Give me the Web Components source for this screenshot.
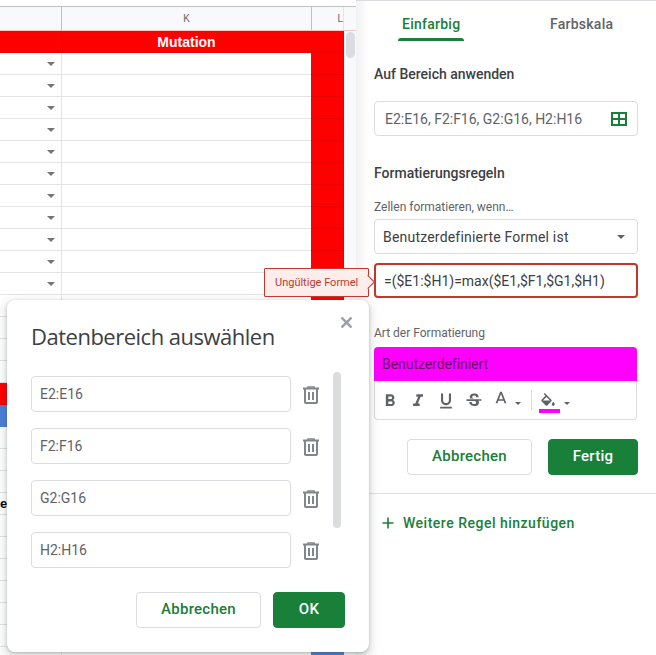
<!DOCTYPE html>
<html lang="de"><head><meta charset="utf-8"><title>Bedingte Formatierung</title>
<style>
html,body{margin:0;padding:0;background:#fff}
body{font-family:Roboto,"Liberation Sans",sans-serif;overflow:hidden;width:656px;height:655px}
</style></head><body>
<x-app></x-app>
<script>
function def(name, html, init){
  customElements.define(name, class extends HTMLElement{
    constructor(){super();const r=this.attachShadow({mode:'open'});r.innerHTML=html;}
    connectedCallback(){ if(init) init.call(this,this.shadowRoot); }
  });
}
const FONT='Roboto,"Liberation Sans",sans-serif';

def('x-btn',`<style>
:host{display:inline-flex;align-items:center;justify-content:center;box-sizing:border-box;height:36px;padding-bottom:2px;border-radius:4px;font:500 15px/1 ${FONT};letter-spacing:.25px;border:1px solid #dadce0;background:#fff;color:#188038}
:host([primary]){background:#188038;border-color:#188038;color:#fff}
</style><slot></slot>`);

def('x-field',`<style>
:host{display:flex;align-items:center;box-sizing:border-box;height:36px;border:1px solid #dadce0;border-radius:4px;padding:0 10px;font:400 14px/1 ${FONT};color:#5f6368;background:#fff}
::slotted(svg){margin-left:auto}
</style><slot></slot>`);

def('x-sheet',`<style>
:host{display:block;position:relative;width:356px;height:655px;overflow:hidden;background:#fff;flex:none;font-family:"Liberation Sans",sans-serif}
.top{height:6px}
.head{display:grid;grid-template-columns:62px 250px 32px 12px;height:25px;box-sizing:border-box;border-top:1px solid #c0c0c0;border-bottom:1px solid #f4c2c2;background:#f8f9fa;font-size:10px;color:#666}
.head div{display:flex;align-items:center;justify-content:center;box-sizing:border-box;border-right:1px solid #c0c0c0}
.head div:nth-child(3){justify-content:flex-end;padding-right:0;border-right:1px solid #e2e3e3}
.head div:last-child{border:0}
.body{display:grid;grid-template-columns:62px 250px 32px 12px;grid-auto-rows:22px}
.c{box-sizing:border-box;border-right:1px solid #e2e3e3;border-bottom:1px solid #e2e3e3;position:relative;display:flex;align-items:center}
.h{background:#f00;color:#fff;border-color:#e60000;font:700 14px/1 "Liberation Sans",sans-serif;justify-content:center}
.red{background:#f00;border-color:#e80000}
.blue{background:#4a7fd8;border-color:#4a7fd8}
.l{margin-left:-1px}
.tr{border-right:0;border-bottom:0;background:#f8f9fa;grid-column:4}
.ar{position:absolute;left:47px;top:9px;width:0;height:0;border:4px solid transparent;border-top:4px solid #757575;border-bottom:0}
b{font-size:13px;color:#000;position:absolute;left:0}
.thumb{position:absolute;left:346px;top:32px;width:9px;height:26px;border-radius:5px;background:#dadce0}
</style>
<div class="top"></div>
<div class="head"><div></div><div>K</div><div>L</div><div></div></div>
<div class="body" id="b"></div><div class="thumb"></div>`,function(r){
  const b=r.getElementById('b'); if(b.children.length) return;
  let h='<div class="c h"></div><div class="c h">Mutation</div><div class="c h red l"></div><div class="c tr"></div>';
  for(let i=0;i<28;i++){
    let cls=i===15?'red':i===16?'blue':'';
    let l=(i<=14||i===15||i===27)?(i===27||i===16?'blue':'red'):cls;
    let first=i<=10?'<span class="ar"></span>':(i===20?'<b>e</b>':'');
    h+=`<div class="c ${cls}">${first}</div><div class="c ${cls}"></div><div class="c l ${l}"></div><div class="c tr"></div>`;
  }
  b.innerHTML=h;
});

def('x-tabs',`<style>
:host{display:flex;height:41px;box-sizing:border-box;border-top:1px solid #dadce0;font:500 14px/1 ${FONT};letter-spacing:.25px;color:#5f6368;position:relative}
span{position:absolute;top:16px}
.a{left:46px;color:#188038}
.b{left:194px}
i{position:absolute;left:42px;top:37px;width:66px;height:3px;background:#188038;border-radius:3px 3px 0 0}
</style><span class="a">Einfarbig</span><span class="b">Farbskala</span><i></i>`);

def('x-tooltip',`<style>
:host{position:absolute;left:264px;top:268px;width:105px;height:29px;box-sizing:border-box;border:1px solid #c5372c;background:#fdeeec;border-radius:1px;color:#c5372c;font:400 11px/27px ${FONT};padding-left:10px;white-space:nowrap;z-index:3}
i{position:absolute;right:-5px;top:8px;width:10px;height:10px;transform:rotate(45deg);background:#fdeeec;border-top:1px solid #c5372c;border-right:1px solid #c5372c;box-sizing:border-box}
</style><slot></slot><i></i>`);

const I=(d,x='')=>`<svg width="20" height="20" viewBox="0 0 24 24" fill="#5f6368" ${x}><path d="${d}"/></svg>`;
def('x-toolbar',`<style>
:host{display:flex;align-items:center;height:39px;box-sizing:border-box;border:1px solid #dadce0;border-top:0;border-radius:0 0 4px 4px;padding:2px 0 0 5px;position:relative}
svg{display:block;flex:none}
.s{margin-right:8px}
.dd{width:0;height:0;border:3px solid transparent;border-top:3px solid #5f6368;border-bottom:0;margin-top:5px;margin-left:4px;flex:none}
.sep{width:1px;height:20px;background:#dadce0;margin:-2px 7px 0 10px;flex:none}
.fill{position:relative;width:21px;height:20px;flex:none;top:2px}
.fill svg{position:absolute;left:0;top:0}
.fill i{position:absolute;left:0;bottom:0;width:21px;height:4px;background:#f0f}
</style>
${I('M15.6 10.79c.97-.67 1.65-1.77 1.65-2.79 0-2.26-1.75-4-4-4H7v14h7.04c2.09 0 3.71-1.7 3.71-3.79 0-1.52-.86-2.82-2.15-3.42zM10 6.5h3c.83 0 1.5.67 1.5 1.5s-.67 1.5-1.5 1.5h-3v-3zm3.5 9H10v-3h3.5c.83 0 1.5.67 1.5 1.5s-.67 1.5-1.5 1.5z','class="s"')}
${I('M10 4v3h2.21l-3.42 8H6v3h8v-3h-2.21l3.42-8H18V4z','class="s"')}
${I('M12 17c3.31 0 6-2.69 6-6V3h-2.5v8c0 1.93-1.57 3.5-3.5 3.5S8.5 12.93 8.5 11V3H6v8c0 3.31 2.69 6 6 6zm-7 2v2h14v-2H5z','class="s"')}
${I('M6.85 7.08C6.85 4.37 9.45 3 12.24 3c1.64 0 3 .49 3.9 1.28.77.65 1.46 1.73 1.46 3.24h-3.01c0-.31-.05-.59-.15-.85-.29-.86-1.2-1.28-2.25-1.28-1.86 0-2.34 1.02-2.34 1.7 0 .48.25.88.74 1.21.38.25.77.48 1.41.7H7.39c-.21-.34-.54-.89-.54-1.92zM21 12v-2H3v2h9.62c1.15.45 1.96.75 1.96 1.97 0 1-.81 1.67-2.28 1.67-1.54 0-2.93-.54-2.93-2.51H6.4c0 .55.08 1.13.24 1.58.81 2.29 3.22 3.3 5.67 3.3 2.35 0 5.59-.92 5.59-4.34 0-.3-.02-1.16-.42-1.84H21z','class="s" style="margin-right:7px"')}
${I('M11 2L5.5 16h2.25l1.12-3h6.25l1.12 3h2.25L13 2h-2zm-1.38 9L12 4.67 14.38 11H9.62z','style="margin-top:-2px"')}
<span class="dd"></span><span class="sep"></span>
<span class="fill"><svg width="18" height="18" viewBox="0 0 24 24" fill="#5f6368"><path d="M16.56 8.94L7.62 0 6.21 1.41l2.38 2.38-5.15 5.15c-.59.59-.59 1.54 0 2.12l5.5 5.5c.29.29.68.44 1.06.44s.77-.15 1.06-.44l5.5-5.5c.59-.58.59-1.53 0-2.12zM5.21 10L10 5.21 14.79 10H5.21zM19 11.5s-2 2.17-2 3.5c0 1.1.9 2 2 2s2-.9 2-2c0-1.33-2-3.5-2-3.5z"/></svg><i></i></span>
<span class="dd"></span>`);

def('x-panel',`<style>
:host{display:block;flex:1;height:655px;background:linear-gradient(90deg,#f1f1f1 0,#fafafa 8px,#fff 13px);position:relative;color:#3c4043;font:400 14px/1 ${FONT}}
.in{margin-left:18px;width:264px;display:flex;flex-direction:column}
h3{margin:0;font:500 14px/16px ${FONT};color:#3c4043}
.lab{font:400 12px/14px ${FONT};color:#5f6368}
.sel{color:#3c4043;letter-spacing:.2px;padding-left:8px}
.dd{margin-left:auto;margin-right:2px;width:0;height:0;border:4px solid transparent;border-top:4px solid #5f6368;border-bottom:0}
.err{box-sizing:border-box;height:35px;border:2px solid #c5372c;border-radius:4px;display:flex;align-items:center;padding-left:8px;color:#3c4043;font-size:14px}
.pre{background:#f0f;height:34px;border-radius:4px 4px 0 0;display:flex;align-items:center;padding-left:8px;color:#660a66;width:263px;box-sizing:border-box;letter-spacing:-.05px}
x-toolbar{width:263px}
.btns{display:flex;justify-content:flex-end;gap:16px}
hr{border:0;border-top:1px solid #e0e0e0;margin:0 0 0 13px}
.add{display:flex;align-items:center;margin-left:26px;color:#188038;font:500 14px/1 ${FONT};letter-spacing:.5px;gap:9px}
</style>
<x-tabs></x-tabs>
<div class="in">
<h3 style="margin-top:25px">Auf Bereich anwenden</h3>
<x-field style="margin-top:19px;height:35px"><span>E2:E16, F2:F16, G2:G16, H2:H16</span>
<svg width="16" height="14" viewBox="0 0 16 14" fill="none" stroke="#188038" stroke-width="2"><rect x="1" y="1" width="14" height="12"/><path d="M8 1v12M1 7h14"/></svg></x-field>
<h3 style="margin-top:29px">Formatierungsregeln</h3>
<div class="lab" style="margin-top:19px">Zellen formatieren, wenn…</div>
<x-field class="sel" style="margin-top:5px;height:35px"><span>Benutzerdefinierte Formel ist</span><i class="dd"></i></x-field>
<div class="err" style="margin-top:9px">=($E1:$H1)=max($E1,$F1,$G1,$H1)</div>
<div class="lab" style="margin-top:28px">Art der Formatierung</div>
<div class="pre" style="margin-top:7px">Benutzerdefiniert</div>
<x-toolbar></x-toolbar>
<div class="btns" style="margin-top:19px"><x-btn style="width:125px">Abbrechen</x-btn><x-btn primary style="width:90px">Fertig</x-btn></div>
</div>
<hr style="margin-top:18px">
<div class="add" style="margin-top:22px"><svg width="12" height="12" viewBox="0 0 12 12" stroke="#188038" stroke-width="1.6"><path d="M6 .5v11M.5 6h11"/></svg><span>Weitere Regel hinzufügen</span></div>
`);

def('x-range',`<style>
:host{display:flex;align-items:center;gap:12px}
x-field{width:260px;padding-left:8px}
svg{flex:none;display:block;margin-top:2px}
</style><x-field><slot></slot></x-field>
<svg width="16" height="18" viewBox="0 0 16 18" fill="none" stroke="#80868b" stroke-width="2"><path d="M0 2.5h16"/><path d="M5 2.5V1h6v1.5" stroke-width="1.5"/><path d="M2 3v13.2a.8.8 0 0 0 .8.8h10.4a.8.8 0 0 0 .8-.8V3"/><path d="M6 6v8M10 6v8"/></svg>`);

def('x-dialog',`<style>
:host{position:absolute;left:7px;top:300px;width:362px;height:352px;box-sizing:border-box;background:#fff;border-radius:8px;box-shadow:0 1px 3px rgba(60,64,67,.3),0 4px 8px 3px rgba(60,64,67,.15);padding:0 24px;z-index:2;display:block}
h2{margin:0;padding-top:23px;padding-bottom:3px;font:400 22px/26px "Open Sans",${FONT};color:#3c4043;letter-spacing:-.5px}
.x{position:absolute;right:17px;top:17px;display:block}
.list{display:flex;flex-direction:column;gap:16px;margin-top:24px}
.sb{position:absolute;left:326px;top:72px;width:8px;height:156px;border-radius:4px;background:#dadce0}
.btns{display:flex;justify-content:flex-end;gap:12px;margin-top:24px}
</style>
<h2>Datenbereich auswählen</h2>
<svg class="x" width="11" height="11" viewBox="0 0 11 11" stroke="#9aa0a6" stroke-width="2.4"><path d="M.5.5l10 10M10.5.5l-10 10"/></svg>
<div class="list"><x-range>E2:E16</x-range><x-range>F2:F16</x-range><x-range>G2:G16</x-range><x-range>H2:H16</x-range></div>
<div class="sb"></div>
<div class="btns"><x-btn style="width:125px">Abbrechen</x-btn><x-btn primary style="width:72px">OK</x-btn></div>`);

def('x-app',`<style>
:host{display:flex;position:relative;width:656px;height:655px;overflow:hidden}
</style>
<x-sheet></x-sheet><x-panel></x-panel>
<x-tooltip>Ungültige Formel</x-tooltip>
<x-dialog></x-dialog>`);
</script>
</body></html>
